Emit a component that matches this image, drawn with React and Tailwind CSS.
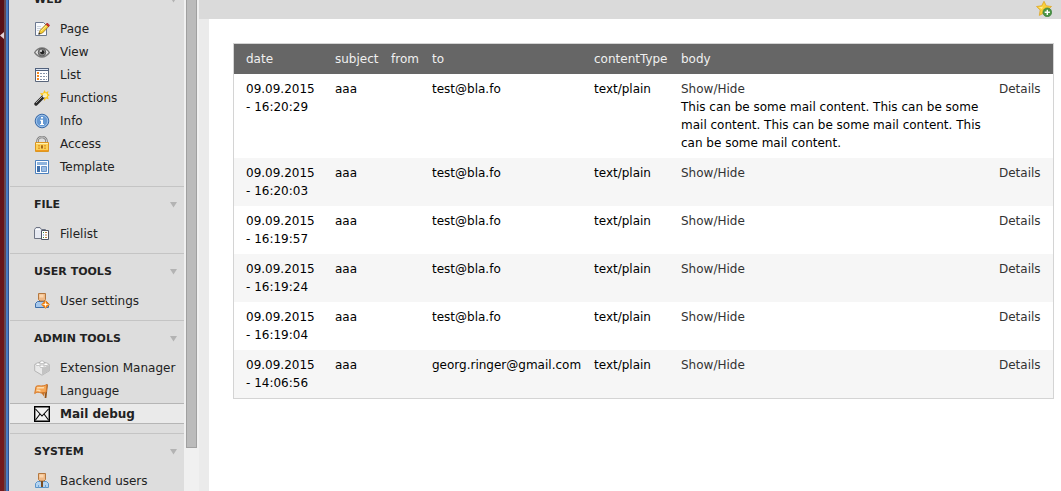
import React from "react";

const Svg = ({ children }) => (
  <svg width="16" height="16" viewBox="0 0 16 16" className="block shrink-0" aria-hidden="true">
    {children}
  </svg>
);

const PageIcon = () => (
  <Svg>
    <path d="M1.500 1.500h8l3 3v10h-11z" fill="#f8fafd" stroke="#6b7890" />
    <path d="M3 5.500h4M3 7.500h4M3 9.500h2" stroke="#cbd3df" />
    <path d="M5 13l1-3.500L12.200 3.200l2.400 2.400L8.500 12z" fill="#f7cf32" stroke="#94701a" strokeWidth=".8" />
    <path d="M7 10.200l5.500-5.500" stroke="#fff3a0" />
    <path d="M12 3.300l1.300-1.300 2.400 2.400-1.300 1.300z" fill="#d2322d" stroke="#9c1414" strokeWidth=".6" />
    <path d="M4.300 13.700l.6-2.200 1.600 1.600z" fill="#222" />
  </Svg>
);

const ViewIcon = () => (
  <Svg>
    <path d="M.6 8.500C3 5 5.500 4 8 4s5 1 7.400 4.500C13 11.800 10.500 13 8 13S3 11.800.6 8.500z" fill="#e8e8e8" stroke="#777" strokeWidth="1.300" />
    <circle cx="8" cy="8.300" r="3.800" fill="#8a8a8a" stroke="#5c5c5c" />
    <circle cx="8.300" cy="8.300" r="2" fill="#222" />
    <circle cx="7" cy="7" r="1" fill="#eee" />
  </Svg>
);

const ListIcon = () => (
  <Svg>
    <path d="M1.500 1.500h13v13h-13z" fill="#fff" stroke="#59657a" />
    <path d="M1 1h14v3H1z" fill="#52627d" />
    <path d="M2 2.500h12" stroke="#dbe4f2" />
    <path d="M3 5h2v2H3zM3 8h2v2H3zM3 11h2v2H3z" fill="#f48a20" />
    <path d="M6 6.500h2m1 0h2m1 0h1M6 9.500h2m1 0h2m1 0h1M6 12.500h2m1 0h2m1 0h1" stroke="#8794aa" />
  </Svg>
);

const FunctionsIcon = () => (
  <Svg>
    <path d="M10.500 0l1.300 2.400L14.500 1l-.6 2.800 2 1.200-2 1.500.8 2.700-2.700-.8L10.400 11l-1-2.800L6 8l1.800-2.600L6 3l3 .2z" fill="#fbc51d" />
    <circle cx="11" cy="5.200" r="2.300" fill="#fff19a" />
    <path d="M2 14L9 7" stroke="#292929" strokeWidth="3.400" strokeLinecap="round" />
    <path d="M2 13l6-6" stroke="#a5a5a5" />
    <path d="M8.200 6.200l1.800 1.800L11.500 6.500 9.700 4.800z" fill="#eee" />
  </Svg>
);

const InfoIcon = () => (
  <Svg>
    <circle cx="8" cy="8" r="6.800" fill="#6598d2" stroke="#3868a6" />
    <circle cx="8" cy="8" r="5.700" fill="none" stroke="#9fc3ea" />
    <path d="M7 4h2v1.600H7zM6 6.800h3V11h1v1H6v-1h1V7.800H6z" fill="#fff" />
  </Svg>
);

const AccessIcon = () => (
  <Svg>
    <path d="M3.500 8V5a4.500 4 0 0 1 9 0v3" fill="none" stroke="#808080" strokeWidth="2.600" />
    <path d="M3.500 8V5a4.500 4 0 0 1 9 0v3" fill="none" stroke="#cfcfcf" />
    <path d="M1.500 6.500h13v9h-13z" fill="#fbd159" stroke="#dd9620" />
    <path d="M2 7.500h12" stroke="#fff0b0" />
    <path d="M2 14.500h12" stroke="#ef9a1e" />
    <path d="M4 9.500h2m1 0h2m1 0h2M4 12.500h2m4 0h2M4 11h2m4 0h2" stroke="#e6a02b" />
    <path d="M7 9.500h2v3H7z" fill="#a3691b" />
  </Svg>
);

const TemplateIcon = () => (
  <Svg>
    <path d="M1.500 1.500h13v13h-13z" fill="#fff" stroke="#4b80bd" />
    <path d="M3 3h10v3H3z" fill="#8fb4dd" />
    <path d="M3 7h3v6H3z" fill="#3e6ea9" />
    <path d="M7.500 7.500h5v5h-5z" fill="#9cbde3" stroke="#6b97cb" />
  </Svg>
);

const FilelistIcon = () => (
  <Svg>
    <path d="M.5 12.500v-9L2 1.500h4l1.500 2h4v9z" fill="#e6e9f1" stroke="#6e7484" />
    <path d="M2 3.500h4" stroke="#fff" />
    <path d="M7.500 4.500h7v9h-7z" fill="#fff" stroke="#505664" />
    <path d="M9 6.500h1M9 11.500h1" stroke="#3f8f3f" />
    <path d="M9 9h1" stroke="#4b76c8" />
    <path d="M11 6.500h2M11 9h2M11 11.500h2" stroke="#b77c42" />
  </Svg>
);

const UserSettingsIcon = () => (
  <Svg>
    <path d="M1.500 14.500v-4l2-2h9l2 2v4z" fill="#a5c7ec" stroke="#3f6fa9" />
    <path d="M4.500.5h7v6L10 8H6L4.500 6.500z" fill="#efb987" stroke="#b4783f" />
    <path d="M5.500 1.500h4v3h-4z" fill="#fbd6ae" />
    <path d="M11.500 7.200l4.300 4.300-4.300 4.300-4.300-4.300z" fill="#ef7d0c" />
    <path d="M11.500 8.500v6M8.500 11.500h6" stroke="#ffd08a" />
    <circle cx="11.500" cy="11.500" r="1.200" fill="#fff" />
  </Svg>
);

const ExtensionIcon = () => (
  <Svg>
    <path d="M.7 4.500L8 1.500l7.300 3v6.300L8 15.200.7 10.800z" fill="#e9e9e9" stroke="#aaaaaa" strokeWidth=".8" />
    <path d="M8 8l7-3.300v6L8 14.900z" fill="#c3c3c3" />
    <path d="M1 5l7 3.200L15 5 8 2z" fill="#f6f6f6" />
    <g fill="#fff" stroke="#a9a9a9" strokeWidth=".7">
      <ellipse cx="8" cy="2.300" rx="2.200" ry="1.400" />
      <ellipse cx="4" cy="4.300" rx="2.200" ry="1.400" />
      <ellipse cx="12" cy="4.300" rx="2.200" ry="1.400" />
      <ellipse cx="8" cy="6.300" rx="2.200" ry="1.400" />
    </g>
  </Svg>
);

const LanguageIcon = () => (
  <Svg>
    <path d="M13 1.500L11.500 15" stroke="#935419" strokeWidth="1.800" />
    <path d="M2 3.500c3-2 5 1 11-2L12.200 9C10 10 8 10.500 5.500 9.500S2 10 .7 10.500z" fill="#f6a756" stroke="#d4782a" />
    <path d="M3 5c2-1 4 .5 7-.5M2.500 7.500c2-1 3 .5 4 .2" stroke="#fddcae" strokeWidth="1.500" fill="none" />
    <path d="M7 9.500l3 4 1-4.500z" fill="#c9752a" />
  </Svg>
);

const MailIcon = () => (
  <Svg>
    <path d="M.7.7h14.600v14.600H.7z" fill="#f2f2f2" stroke="#000" strokeWidth="1.400" />
    <path d="M1.500 3L8 10l6.500-7M1.500 14L6 8M14.500 14L10 8" fill="none" stroke="#000" strokeWidth="1.100" />
  </Svg>
);

const BackendUsersIcon = () => (
  <Svg>
    <path d="M1.500 14.500v-4l2-2h9l2 2v4z" fill="#b2d3f1" stroke="#5c94c8" />
    <path d="M4.500.5h7v6L10 8H6L4.500 6.500z" fill="#efb987" stroke="#b4783f" />
    <path d="M5.500 1.500h4v3h-4z" fill="#fbd6ae" />
    <path d="M7 8h2v6H7z" fill="#7b4d21" />
    <path d="M4.500 12v2.500M11.500 12v2.500" stroke="#6ea3d3" />
  </Svg>
);

const BookmarkIcon = () => (
  <Svg>
    <path d="M8 .3l2.300 4.500 5.200.7-3.700 3.500.9 5.200L8 12l-4.700 2.400L4.200 9 .5 5.500l5.200-.7z" fill="#f9cf38" stroke="#dda62a" strokeWidth=".8" />
    <path d="M8 2.500L6.500 6l-4 .3L6 8z" fill="#fff08e" />
    <circle cx="11.300" cy="11.300" r="4.400" fill="#4a9445" stroke="#377b36" strokeWidth=".6" />
    <path d="M11.300 8.700v5.200M8.700 11.300h5.200" stroke="#fff" strokeWidth="1.400" />
  </Svg>
);

const groups = [
  {
    title: "WEB",
    items: [
      ["Page", PageIcon],
      ["View", ViewIcon],
      ["List", ListIcon],
      ["Functions", FunctionsIcon],
      ["Info", InfoIcon],
      ["Access", AccessIcon],
      ["Template", TemplateIcon],
    ],
  },
  { title: "FILE", items: [["Filelist", FilelistIcon]] },
  { title: "USER TOOLS", items: [["User settings", UserSettingsIcon]] },
  {
    title: "ADMIN TOOLS",
    items: [
      ["Extension Manager", ExtensionIcon],
      ["Language", LanguageIcon],
      ["Mail debug", MailIcon],
    ],
  },
  { title: "SYSTEM", items: [["Backend users", BackendUsersIcon]] },
];

const ACTIVE = "Mail debug";

const mails = [
  {
    date: "09.09.2015 - 16:20:29",
    to: "test@bla.fo",
    body: "This can be some mail content. This can be some mail content. This can be some mail content. This can be some mail content.",
  },
  { date: "09.09.2015 - 16:20:03", to: "test@bla.fo" },
  { date: "09.09.2015 - 16:19:57", to: "test@bla.fo" },
  { date: "09.09.2015 - 16:19:24", to: "test@bla.fo" },
  { date: "09.09.2015 - 16:19:04", to: "test@bla.fo" },
  { date: "09.09.2015 - 14:06:56", to: "georg.ringer@gmail.com" },
];

function MenuItem({ label, Icon }) {
  const active = label === ACTIVE;
  return (
    <li className="mb-0.5">
      <a
        href="#"
        aria-current={active ? "page" : undefined}
        className={
          "flex h-[21px] items-center gap-2.5 whitespace-nowrap border-y pl-6 " +
          (active ? "border-[#b5b5b5] bg-[#eaeaea] font-bold" : "border-transparent")
        }
      >
        <Icon />
        {label}
      </a>
    </li>
  );
}

function MenuGroup({ title, items }) {
  return (
    <section className="border-t border-[#c4c4c4] pb-[7px]">
      <h2>
        <button
          type="button"
          className="flex h-9 w-full items-center justify-between pl-6 pr-[7px] text-[11px] font-bold"
        >
          {title}
          <svg width="7" height="6" viewBox="0 0 7 6" aria-hidden="true">
            <path d="M0 0h7L3.500 5.500z" fill="#b3b3b3" />
          </svg>
        </button>
      </h2>
      <ul>
        {items.map(([label, Icon]) => (
          <MenuItem key={label} label={label} Icon={Icon} />
        ))}
      </ul>
    </section>
  );
}

export default function App() {
  return (
    <div className="flex h-screen overflow-hidden bg-white font-['DejaVu_Sans',Verdana,sans-serif] text-xs text-[#222]">
      <div className="w-1 shrink-0 bg-linear-to-b from-[#571017] to-[#751b1d] pt-8">
        <svg width="4" height="7" viewBox="0 0 4 7" className="block" aria-hidden="true">
          <path d="M0 3.500L4 0v7z" fill="#e4d3d8" />
        </svg>
      </div>
      <div className="w-0.5 shrink-0 bg-[#65474f]" />
      <div className="w-[3px] shrink-0 border-r border-[#2c5193] bg-[#4a7cc4]" />
      <nav className="w-[175px] shrink-0 overflow-hidden bg-[#dddddd] pl-px">
        <div className="-mt-[19px]">
          {groups.map((group) => (
            <MenuGroup key={group.title} {...group} />
          ))}
        </div>
      </nav>
      <div className="w-[15px] shrink-0 bg-[#f0f0f0] px-0.5">
        <div className="h-[91.2%] w-[11px] border border-t-0 border-[#a0a0a0] bg-[#bbbbbb]" />
      </div>
      <main className="flex min-w-0 grow flex-col">
        <header className="flex h-[19px] shrink-0 justify-end bg-[#dadada] pr-[9px] pt-px">
          <button type="button" aria-label="Create bookmark" className="h-4">
            <BookmarkIcon />
          </button>
        </header>
        <div className="grow border-l-10 border-[#ebebeb] pl-6 pr-[7px] pt-6">
          <div className="border border-[#d4d4d4]">
            <table className="w-full table-fixed text-left leading-[18px] text-black">
              <colgroup>
                <col className="w-[89px]" />
                <col className="w-[56px]" />
                <col className="w-[41px]" />
                <col className="w-[162px]" />
                <col className="w-[87px]" />
                <col />
                <col className="w-[66px]" />
              </colgroup>
              <thead className="bg-[#666666] text-[#f0f0f0]">
                <tr>
                  {["date", "subject", "from", "to", "contentType", "body"].map((name) => (
                    <th key={name} scope="col" className="py-1.5 pl-3 font-normal">
                      {name}
                    </th>
                  ))}
                  <td />
                </tr>
              </thead>
              <tbody>
                {mails.map((mail) => (
                  <tr key={mail.date} className="align-top even:bg-[#f6f6f6]">
                    <td className="py-1.5 pl-3 pr-1.5">{mail.date}</td>
                    <td className="py-1.5 pl-3">aaa</td>
                    <td className="py-1.5 pl-3" />
                    <td className="py-1.5 pl-3">{mail.to}</td>
                    <td className="py-1.5 pl-3">text/plain</td>
                    <td className="py-1.5 pl-3">
                      <a href="#" className="text-[#333]">
                        Show/Hide
                      </a>
                      {mail.body && <p>{mail.body}</p>}
                    </td>
                    <td className="py-1.5 pl-3">
                      <a href="#" className="text-[#333]">
                        Details
                      </a>
                    </td>
                  </tr>
                ))}
              </tbody>
            </table>
          </div>
        </div>
      </main>
    </div>
  );
}
